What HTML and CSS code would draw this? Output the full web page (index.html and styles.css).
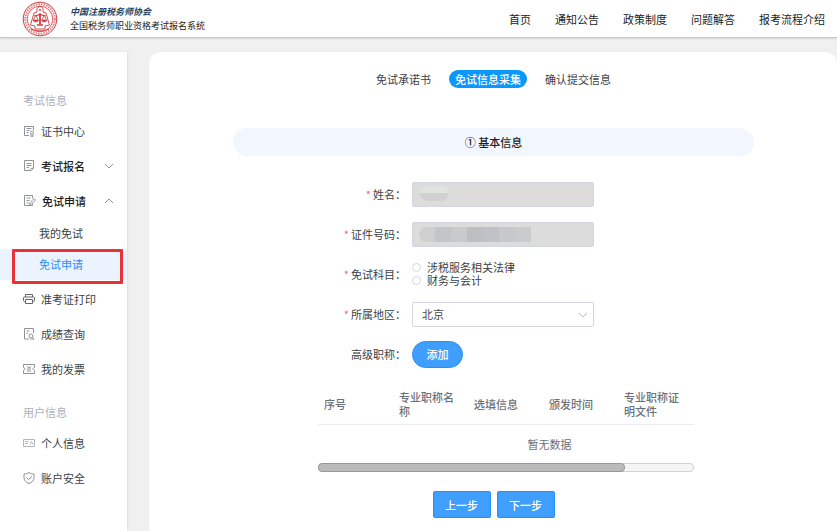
FILE: index.html
```html
<!DOCTYPE html>
<html lang="zh-CN">
<head>
<meta charset="utf-8">
<meta name="viewport" content="width=device-width, initial-scale=1">
<title>全国税务师职业资格考试报名系统</title>
<link rel="stylesheet" href="styles.css">
</head>
<body>
<header class="topbar">
  <div class="brand">
    <svg class="brand-logo" viewBox="0 0 36 36" fill="none" stroke="#cf3a40" aria-hidden="true">
      <circle cx="18" cy="18" r="16.800" stroke-width="1"/>
      <circle cx="18" cy="18" r="14.800" stroke-width="2.200" stroke-dasharray="1.600 1" opacity=".6"/>
      <circle cx="18" cy="18" r="12.800" stroke-width=".8"/>
      <path d="M15 11V8.500c0-4 6-4 6 0V11l3 1 3.500 12-4.500 1v3H13v-3l-4.500-1L12 12z" stroke-width=".9"/>
      <circle cx="18" cy="9" r="1" fill="#cf3a40" stroke="none"/>
      <path d="M18 12.500v11" stroke-width="1.800"/>
      <path d="M12.500 14.500c3 .5 3.500-1 5.500-1s2.500 1.500 5.500 1M15 24h6" stroke-width="1.300"/>
      <path d="M13.500 14.500L11.500 19M14 14.500l2 4.500M22 14.500L20 19M22.500 14.500l2 4.500" stroke-width=".8"/>
      <path d="M11 19h5.500c-.5 2.500-5 2.500-5.500 0zM19.500 19H25c-.5 2.500-5 2.500-5.500 0z" fill="#cf3a40" stroke-width=".6"/>
      <path d="M9 28c5 2.500 13 2.500 18 0" stroke-width="1"/>
    </svg>
    <div class="brand-text">
      <span class="brand-name">中国注册税务师协会</span>
      <span class="brand-system">全国税务师职业资格考试报名系统</span>
    </div>
  </div>
  <nav class="topnav">
    <a href="#">首页</a>
    <a href="#">通知公告</a>
    <a href="#">政策制度</a>
    <a href="#">问题解答</a>
    <a href="#">报考流程介绍</a>
  </nav>
</header>

<div class="layout">
  <nav class="sidebar">
    <h2 class="menu-title">考试信息</h2>
    <a class="menu-item" href="#">
      <svg class="icon" viewBox="0 0 12 12"><path d="M10.500 5V1.500h-9v9H6M3.500 3.500h5M3.500 5.500h3M3.500 7.500h2"/><circle cx="9" cy="7.500" r="1.500"/><path d="M8 9v2.500l1-.5 1 .5V9"/></svg>
      <span>证书中心</span>
    </a>
    <a class="menu-item strong" href="#">
      <svg class="icon" viewBox="0 0 12 12"><path d="M10.500 8V.5h-9v10H6M3.500 3.500h5M3.500 5.500h5M3.500 7.500h2.500M6 10.500c1.500.5 3.500 0 4.500-2.500L8 8.500z"/></svg>
      <span>考试报名</span>
      <svg class="arrow" viewBox="0 0 10 10"><path d="M1 3l4 4 4-4"/></svg>
    </a>
    <a class="menu-item strong" href="#">
      <svg class="icon wide" viewBox="0 0 13 12"><path d="M9.500 3V.5h-8v10h8V8.500M3.500 3h4M3.500 5.500h3M3.500 8h2M11 3.500l1.500 1.500L8.500 9l-2 .5.5-2z"/></svg>
      <span>免试申请</span>
      <svg class="arrow" viewBox="0 0 10 10"><path d="M1 7l4-4 4 4"/></svg>
    </a>
    <div class="submenu">
      <a href="#">我的免试</a>
      <a class="active" href="#" aria-current="page">免试申请</a>
    </div>
    <a class="menu-item" href="#">
      <svg class="icon dark" viewBox="0 0 12 12"><path d="M2.500 4V1.500h7V4M2.500 8.500h-1c-.7 0-1-.3-1-1V5c0-.7.3-1 1-1h9c.7 0 1 .3 1 1v2.500c0 .7-.3 1-1 1h-1M2.500 6.500h7v4h-7z"/></svg>
      <span>准考证打印</span>
    </a>
    <a class="menu-item" href="#">
      <svg class="icon" viewBox="0 0 12 12"><path d="M10.500 5V.5h-9v10.500H6M3.500 3h3M3.500 5.500h1.500"/><circle cx="8" cy="8" r="2"/><path d="M9.500 9.500l1.500 1.500H7.500"/></svg>
      <span>成绩查询</span>
    </a>
    <a class="menu-item" href="#">
      <svg class="icon" viewBox="0 0 12 12"><path d="M.5 1.500h11v3c-2 .5-2 2.500 0 3v3H.5v-3c2-.5 2-2.500 0-3zM4 3.500l2 1.500 2-1.500M4 6h4M4 8h4"/></svg>
      <span>我的发票</span>
    </a>
    <h2 class="menu-title">用户信息</h2>
    <a class="menu-item" href="#">
      <svg class="icon light" viewBox="0 0 12 12"><path d="M.5 2.500h11v7H.5zM2 4.500h3.500M2 6.500h3M7 7.500l1.500-3 1.500 3"/></svg>
      <span>个人信息</span>
    </a>
    <a class="menu-item" href="#">
      <svg class="icon" viewBox="0 0 12 12"><path d="M6 .5c1.500 1 3 1.500 5 1.500v3.500c0 3-2 5-5 6-3-1-5-3-5-6V2C3 2 4.500 1.500 6 .5zM3.500 5.500l2 2L9 4.500"/></svg>
      <span>账户安全</span>
    </a>
  </nav>

  <main class="card">
    <div class="steps">
      <span class="step">免试承诺书</span>
      <span class="step current">免试信息采集</span>
      <span class="step">确认提交信息</span>
    </div>
    <h1 class="section-title">① 基本信息</h1>
    <form class="form">
      <div class="row">
        <label class="label required" for="name">姓名：</label>
        <div class="field">
          <input class="control" id="name" type="text" disabled>
          <span class="mask mask-name"></span>
        </div>
      </div>
      <div class="row">
        <label class="label required" for="idno">证件号码：</label>
        <div class="field">
          <input class="control" id="idno" type="text" disabled>
          <span class="mask mask-id"></span>
        </div>
      </div>
      <div class="row" role="radiogroup" aria-labelledby="subject-label">
        <span class="label required" id="subject-label">免试科目：</span>
        <div class="radios">
          <label class="radio"><input type="radio" name="subject">涉税服务相关法律</label>
          <label class="radio"><input type="radio" name="subject">财务与会计</label>
        </div>
      </div>
      <div class="row">
        <label class="label required" for="region">所属地区：</label>
        <div class="field">
          <select class="control" id="region"><option>北京</option></select>
          <svg class="arrow select-arrow" viewBox="0 0 10 10"><path d="M1 3l4 4 4-4"/></svg>
        </div>
      </div>
      <div class="row">
        <label class="label" for="add">高级职称：</label>
        <button class="btn round" id="add" type="button">添加</button>
      </div>
      <div class="table-wrap">
        <table class="table">
          <thead>
            <tr><th>序号</th><th>专业职称名称</th><th>选填信息</th><th>颁发时间</th><th>专业职称证明文件</th><th class="last"></th></tr>
          </thead>
          <tbody>
            <tr><td colspan="6">暂无数据</td></tr>
          </tbody>
        </table>
      </div>
      <div class="scrollbar"><div class="thumb"></div></div>
    </form>
    <div class="actions">
      <button class="btn" type="button">上一步</button>
      <button class="btn" type="button">下一步</button>
    </div>
  </main>
</div>
</body>
</html>
```
FILE: styles.css
```css
* {
  box-sizing: border-box;
}

body {
  margin: 0;
  min-height: 100vh;
  display: flex;
  flex-direction: column;
  background: #f0f0f0;
  color: #3c3f45;
  font: 11px/14px "Noto Sans CJK SC", sans-serif;
}

a {
  color: inherit;
  text-decoration: none;
}

button,
input,
select {
  margin: 0;
  font: inherit;
}

/* Header */
.topbar {
  display: flex;
  align-items: center;
  justify-content: space-between;
  height: 38px;
  padding: 0 12px 0 22px;
  background: #fff;
  border-bottom: 1px solid #c6c6c6;
  box-shadow: 0 1px 2px #d8d8d8;
}

.brand {
  display: flex;
  align-items: center;
  gap: 12px;
}

.brand-logo {
  width: 36px;
  height: 36px;
}

.brand-text {
  display: flex;
  flex-direction: column;
  white-space: nowrap;
}

.brand-name {
  color: #263f5c;
  font-size: 9px;
  font-style: italic;
  font-weight: 700;
  line-height: 14px;
}

.brand-system {
  color: #222;
  font-size: 9px;
  line-height: 14px;
}

.topnav {
  display: flex;
  gap: 24px;
  color: #222;
  white-space: nowrap;
}

.layout {
  flex: 1;
  display: flex;
  gap: 22px;
  padding-top: 14px;
}

/* Side menu */
.sidebar {
  flex: 0 0 127px;
  padding-top: 22px;
  background: #fff;
  box-shadow: 1px 0 2px #dedede;
}

.menu-title {
  margin: 13px 0 0 23px;
  color: #adb1bd;
  font-size: 11px;
  font-weight: 400;
  line-height: 26px;
}

.menu-item {
  display: flex;
  align-items: center;
  gap: 6px;
  height: 35px;
  padding: 0 13px 0 23px;
}

.menu-item.strong {
  color: #1c1c1c;
  font-weight: 500;
}

.icon,
.arrow {
  flex: none;
  fill: none;
  stroke: #8f9399;
  stroke-width: 1;
}

.icon {
  width: 12px;
  height: 12px;
}

.icon.wide {
  width: 13px;
}

.icon.dark {
  stroke: #62676f;
}

.icon.light {
  stroke: #b3b6bb;
}

.arrow {
  width: 10px;
  height: 10px;
  margin-left: auto;
}

.submenu {
  margin-bottom: 1px;
}

.submenu a {
  display: block;
  padding-left: 39px;
  line-height: 31px;
}

.submenu .active {
  position: relative;
  background: #ebf3ff;
  color: #2d8cff;
}

.submenu .active::after {
  content: "";
  position: absolute;
  inset: 0 4px -4px 12px;
  border: 3px solid #e83236;
  border-radius: 1px;
}

/* Content */
.card {
  flex: 1;
  min-width: 0;
  padding: 18px 83px 12px 84px;
  background: #fff;
  border-radius: 12px 12px 0 0;
}

.steps {
  display: flex;
  justify-content: center;
  gap: 12px;
  white-space: nowrap;
}

.step {
  padding: 0 6px;
  line-height: 18px;
}

.step.current {
  background: #0a97ff;
  border-radius: 9px;
  color: #fff;
  font-weight: 500;
}

.section-title {
  margin: 40px 0 18px;
  background: #f2f7ff;
  border-radius: 14px;
  color: #1c1c1c;
  font-size: 11px;
  font-weight: 500;
  line-height: 28px;
  text-align: center;
}

.form {
  margin: 0 60px 0 85px;
}

.row {
  display: grid;
  grid-template-columns: 88px 182px;
  column-gap: 6px;
  align-items: center;
  height: 40px;
}

.label {
  text-align: right;
  white-space: nowrap;
}

.required::before {
  content: "*";
  margin-right: 2px;
  color: #f56c6c;
}

.field {
  position: relative;
  display: flex;
}

.control {
  width: 100%;
  height: 25px;
  padding: 0 9px;
  appearance: none;
  background: #fff;
  border: 1px solid #d3d6e0;
  border-radius: 2px;
  color: #44474d;
}

.control:disabled {
  background: #dcdcdc;
}

.mask {
  position: absolute;
}

.mask-name {
  top: 4px;
  left: 8px;
  width: 29px;
  height: 15px;
  border-radius: 8px;
  background: linear-gradient(#e1e2e2 50%, #d1d1d1 50%);
}

.mask-id {
  top: 5px;
  left: 7px;
  width: 112px;
  height: 15px;
  border-radius: 8px 0 0 8px;
  background: linear-gradient(90deg, #cfcfcf 16px, #c4c5c6 16px 32px, #c9cacb 32px 48px, #bebfc0 48px 64px, #c0c2c7 64px 80px, #c6c8ca 80px 96px, #c9cccd 96px);
}

.radios {
  display: flex;
  flex-direction: column;
}

.radio {
  display: flex;
  align-items: center;
  gap: 6px;
  line-height: 13px;
}

.radio input {
  width: 9px;
  height: 9px;
  appearance: none;
  background: #fff;
  border: 1px solid #d3d6e0;
  border-radius: 50%;
}

.radio input:checked {
  border: 3px solid #409eff;
}

.select-arrow {
  position: absolute;
  top: 8px;
  right: 6px;
  stroke: #b8bcc6;
  pointer-events: none;
}

.btn {
  width: 58px;
  height: 27px;
  padding: 0;
  background: #409eff;
  border: 1px solid #2490ff;
  border-radius: 2px;
  color: #fff;
  font-weight: 500;
}

.btn.round {
  width: 51px;
  border-radius: 14px;
}

/* Title records */
.table-wrap {
  margin-top: 10px;
  overflow: hidden;
}

.table {
  width: 463px;
  table-layout: fixed;
  border-collapse: separate;
  border-spacing: 0;
  color: #6c7078;
}

.table th {
  width: 75px;
  padding: 6px;
  border-bottom: 1px solid #e9ecf5;
  font-weight: 500;
  text-align: left;
}

.table .last {
  width: 88px;
}

.table td {
  padding: 12px 6px;
  text-align: center;
}

.scrollbar {
  height: 9px;
  background: #f5f5f5;
  border: 1px solid #d2d2d2;
  border-radius: 4px;
}

.thumb {
  width: 82%;
  height: 9px;
  margin: -1px;
  background: #bbb;
  border: 1px solid #989898;
  border-radius: 4px;
}

.actions {
  display: flex;
  justify-content: center;
  gap: 6px;
  margin-top: 19px;
}
```
